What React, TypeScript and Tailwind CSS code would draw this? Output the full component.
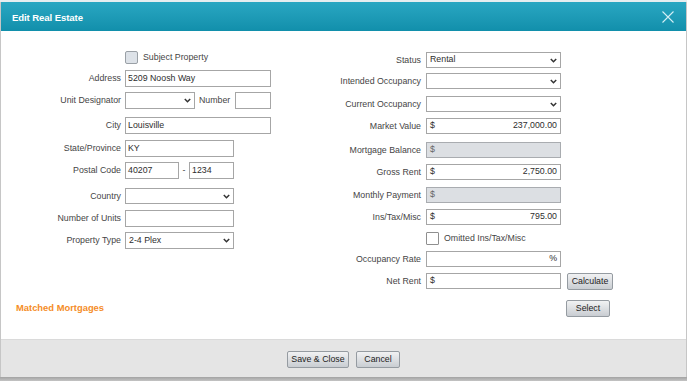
import React from "react";

const Chevron = () => (
  <svg width="7" height="5" viewBox="0 0 7 5" className="shrink-0">
    <path d="M0.8 0.9 L3.5 3.7 L6.2 0.9" fill="none" stroke="#333" strokeWidth="1.5" />
  </svg>
);

function Select({ cls, value }: { cls: string; value?: string }) {
  return (
    <div className={`flex items-center justify-between border border-[#a6a6a6] bg-white pl-[3px] pr-[3px] box-border text-[#2e2e2e] ${cls}`}>
      <span>{value ?? ""}</span>
      <Chevron />
    </div>
  );
}

function Input({ cls, value }: { cls: string; value?: string }) {
  return (
    <div className={`flex items-center border border-[#a6a6a6] bg-white pl-[2px] box-border text-[#2e2e2e] ${cls}`}>
      <span>{value ?? ""}</span>
    </div>
  );
}

function Money({ value, disabled, suffix }: { value?: string; disabled?: boolean; suffix?: string }) {
  return (
    <div
      className={
        disabled
          ? "flex items-center justify-between border border-[#a9acb0] bg-[#dcdfe3] w-[135px] h-[16px] px-[3px] box-border text-[#666]"
          : "flex items-center justify-between border border-[#a6a6a6] bg-white w-[135px] h-[16px] px-[3px] box-border text-[#2e2e2e]"
      }
    >
      <span>{suffix ? "" : "$"}</span>
      <span>{suffix ? suffix : value ?? ""}</span>
    </div>
  );
}

function LRow({ h, label, children }: { h: string; label: string; children: React.ReactNode }) {
  return (
    <div className={`flex items-start ${h}`}>
      <div className="w-[124px] pr-[4px] text-right h-[17px] leading-[17px] text-[#454545]">{label}</div>
      {children}
    </div>
  );
}

function RRow({ h, label, children }: { h: string; label: string; children: React.ReactNode }) {
  return (
    <div className={`flex items-start ${h}`}>
      <div className="w-[95px] pr-[5px] text-right h-[16px] leading-[16px] text-[#454545] whitespace-nowrap">{label}</div>
      {children}
    </div>
  );
}

const btn =
  "flex items-center justify-center border border-[#959ba1] rounded-[2px] bg-gradient-to-b from-[#f1f2f3] to-[#c9cdd2] text-[#222] box-border";

export default function App() {
  return (
    <div className="w-[688px] h-[381px] bg-white overflow-hidden font-['Liberation_Sans',Arial,sans-serif] text-[8.8px]">
      <div className="h-[2px] bg-[#e6eef0] w-[687px]" />
      <div className="w-[687px] border-x border-[#c6c6c6] box-border flex flex-col">
        {/* header */}
        <div className="h-[29px] bg-gradient-to-b from-[#29a7c2] to-[#118fab] flex items-center justify-between pl-[11px] pr-[12px]">
          <span className="text-white font-bold text-[9.6px] tracking-[-0.1px] mt-[4px]">Edit Real Estate</span>
          <svg width="12" height="12" viewBox="0 0 12 12" className="mt-[1px]">
            <path d="M0.5 0.5 L11.5 11.5 M11.5 0.5 L0.5 11.5" stroke="#d3eff5" strokeWidth="1.1" fill="none" />
          </svg>
        </div>
        {/* body */}
        <div className="h-[308px] bg-white flex flex-col">
          <div className="flex pt-[20px]">
            {/* left column */}
            <div className="w-[330px] flex flex-col">
              <div className="flex items-start h-[19px]">
                <div className="w-[124px]" />
                <div className="w-[13px] h-[13px] border border-[#9aa0a6] rounded-[2px] bg-[#dde2e8] box-border" />
                <span className="ml-[5px] h-[13px] leading-[12px] text-[#454545]">Subject Property</span>
              </div>
              <LRow h="h-[22px]" label="Address">
                <Input cls="w-[146px] h-[17px]" value="5209 Noosh Way" />
              </LRow>
              <LRow h="h-[25px]" label="Unit Designator">
                <Select cls="w-[70px] h-[17px]" />
                <span className="ml-[4px] h-[17px] leading-[17px] text-[#454545]">Number</span>
                <Input cls="ml-[5px] w-[36px] h-[17px]" />
              </LRow>
              <LRow h="h-[23px]" label="City">
                <Input cls="w-[146px] h-[17px]" value="Louisville" />
              </LRow>
              <LRow h="h-[22px]" label="State/Province">
                <Input cls="w-[109px] h-[17px]" value="KY" />
              </LRow>
              <LRow h="h-[26px]" label="Postal Code">
                <Input cls="w-[54px] h-[17px]" value="40207" />
                <span className="w-[10px] text-center h-[17px] leading-[17px] text-[#454545]">-</span>
                <Input cls="w-[45px] h-[17px]" value="1234" />
              </LRow>
              <LRow h="h-[22px]" label="Country">
                <Select cls="w-[109px] h-[16px]" />
              </LRow>
              <LRow h="h-[22px]" label="Number of Units">
                <Input cls="w-[109px] h-[17px]" />
              </LRow>
              <LRow h="h-[17px]" label="Property Type">
                <Select cls="w-[109px] h-[17px]" value="2-4 Plex" />
              </LRow>
            </div>
            {/* right column */}
            <div className="flex flex-col pt-[1px]">
              <RRow h="h-[21px]" label="Status">
                <Select cls="w-[135px] h-[16px]" value="Rental" />
              </RRow>
              <RRow h="h-[23px]" label="Intended Occupancy">
                <Select cls="w-[135px] h-[16px]" />
              </RRow>
              <RRow h="h-[22px]" label="Current Occupancy">
                <Select cls="w-[135px] h-[16px]" />
              </RRow>
              <RRow h="h-[24px]" label="Market Value">
                <Money value="237,000.00" />
              </RRow>
              <RRow h="h-[22px]" label="Mortgage Balance">
                <Money disabled />
              </RRow>
              <RRow h="h-[23px]" label="Gross Rent">
                <Money value="2,750.00" />
              </RRow>
              <RRow h="h-[22px]" label="Monthly Payment">
                <Money disabled />
              </RRow>
              <RRow h="h-[23px]" label="Ins/Tax/Misc">
                <Money value="795.00" />
              </RRow>
              <div className="flex items-start h-[19px]">
                <div className="w-[95px]" />
                <div className="w-[13px] h-[13px] border border-[#8f8f8f] rounded-[1px] bg-white box-border" />
                <span className="ml-[5px] h-[13px] leading-[12px] text-[#454545]">Omitted Ins/Tax/Misc</span>
              </div>
              <RRow h="h-[22px]" label="Occupancy Rate">
                <Money suffix="%" />
              </RRow>
              <RRow h="h-[17px]" label="Net Rent">
                <Money value="" />
                <div className={`${btn} ml-[6px] w-[46px] h-[17px]`}>Calculate</div>
              </RRow>
            </div>
          </div>
          <div className="mt-[10px] flex items-center justify-between pl-[15px] pr-[76px] h-[17px]">
            <span className="font-bold text-[9.4px] text-[#f58d28]">Matched Mortgages</span>
            <div className={`${btn} w-[44px] h-[17px]`}>Select</div>
          </div>
        </div>
        {/* footer */}
        <div className="h-[38px] bg-[#e5e5e5] border-t border-[#dadada] box-border flex items-center justify-center gap-[7px] pt-[2px]">
          <div className={`${btn} w-[62px] h-[17px]`}>Save &amp; Close</div>
          <div className={`${btn} w-[44px] h-[17px]`}>Cancel</div>
        </div>
      </div>
      <div className="h-[4px] w-[687px] bg-gradient-to-b from-[#a3a3a3] to-[#c4c4c4]" />
    </div>
  );
}
